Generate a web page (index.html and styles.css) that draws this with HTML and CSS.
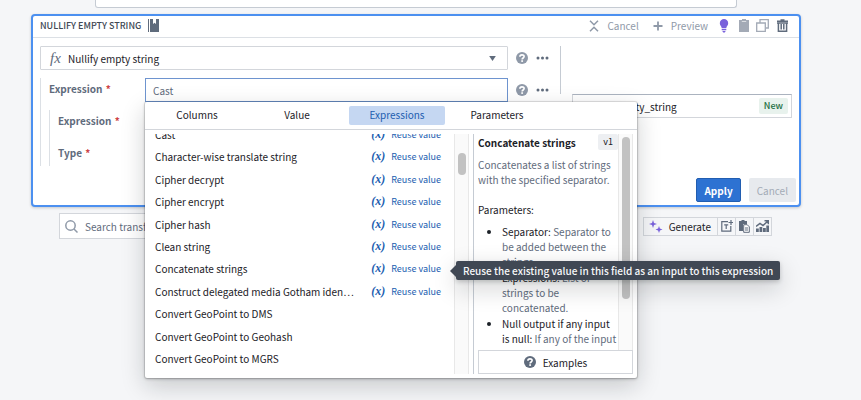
FILE: index.html
```html
<!DOCTYPE html>
<html lang="en">
<head>
  <meta charset="UTF-8">
  <meta name="viewport" content="width=device-width, initial-scale=1.0">
  <title>Nullify empty string</title>
  <link rel="stylesheet" href="styles.css">
</head>
<body>
  <!-- Shared icons -->
  <svg class="sprite" aria-hidden="true">
    <symbol id="help" viewBox="0 0 16 16">
      <circle cx="8" cy="8" r="8" fill="currentColor"/>
      <path d="M5.200 6.200C5.200 3 10.800 3 10.800 6c0 2-2.600 2-2.600 4" fill="none" stroke="#fff" stroke-width="2.200"/>
      <path d="M7 11h2.400v2.200H7z" fill="#fff"/>
    </symbol>
    <symbol id="more" viewBox="0 0 13 4">
      <circle cx="2" cy="2" r="1.500"/><circle cx="6.500" cy="2" r="1.500"/><circle cx="11" cy="2" r="1.500"/>
    </symbol>
  </svg>

  <!-- Previous transform -->
  <div class="previous-card"></div>

  <!-- Transform card -->
  <main class="card">
    <header class="card-header">
      <h1 class="card-title">Nullify empty string</h1>
      <svg class="icon-manual" viewBox="0 0 11 13" fill="#5f6b7c"><path d="M0 0h1v13H0zM2 0h3v5l1.500-1.300L8 5V0h3v13H2z"/></svg>
      <div class="card-actions">
        <button class="header-button" type="button">
          <svg width="10" height="12" viewBox="0 0 10 12" fill="none" stroke="currentColor" stroke-width="1.500"><path d="M1 .8l4 4 4-4M1 11.200l4-4 4 4"/></svg>
          Cancel
        </button>
        <button class="header-button preview" type="button">
          <svg width="10" height="10" viewBox="0 0 10 10" fill="none" stroke="currentColor" stroke-width="1.800"><path d="M5 .5v9M.5 5h9"/></svg>
          Preview
        </button>
        <button class="icon-button bulb" type="button" aria-label="Suggestions">
          <svg width="10" height="14" viewBox="0 0 10 14" fill="#7961db"><path d="M5 0a4.200 4.200 0 0 1 4.200 4.200C9.200 6.500 7.500 7 7.300 9H2.700C2.500 7 .8 6.500.8 4.200A4.200 4.200 0 0 1 5 0zM2.700 9.800h4.600v1.400H2.700zM3.300 12h3.400L5.800 13.400H4.200z"/></svg>
        </button>
        <button class="icon-button paste" type="button" aria-label="Paste">
          <svg width="10" height="13" viewBox="0 0 10 13" fill="#a3aab6"><path d="M3 0h4v1h3v12H0V1h3z"/><path d="M2.800 2.500h4.400" stroke="#fff" stroke-width=".6"/></svg>
        </button>
        <button class="icon-button copy" type="button" aria-label="Duplicate">
          <svg width="13" height="13" viewBox="0 0 13 13" fill="none" stroke="#a3aab6" stroke-width="1.300"><path d="M4 3.500V.7h8.300V9H10M.7 4h8.600v8.300H.7z"/></svg>
        </button>
        <button class="icon-button" type="button" aria-label="Delete">
          <svg width="11" height="13" viewBox="0 0 11 13" fill="none" stroke="#5f6b7c" stroke-width="1.500"><path d="M0 2.200h11M3.500 1h4M1.400 4v8.200h8.200V4M0 4h11M4.200 5v5.500M6.800 5v5.500"/></svg>
        </button>
      </div>
    </header>

    <form class="card-body">
      <div class="inputs">
        <div class="field-row">
          <div class="select-box">
            <span class="fx">fx</span>
            <select class="transform-select" aria-label="Transform">
              <option>Nullify empty string</option>
            </select>
            <svg class="caret" viewBox="0 0 8 6"><path d="M0 0h8L4 6z"/></svg>
          </div>
          <button class="row-icon help" type="button" aria-label="Help"><svg width="12" height="12"><use href="#help"/></svg></button>
          <button class="row-icon" type="button" aria-label="More"><svg width="13" height="4"><use href="#more"/></svg></button>
        </div>

        <div class="group">
          <div class="field-row">
            <label class="field-label" for="expression">Expression <span class="required">*</span></label>
            <div class="expression-box">
              <input class="expression-input" id="expression" type="text" placeholder="Cast">

              <!-- Suggestions popover -->
              <section class="popover">
                <div class="tabs">
                  <button class="tab" type="button">Columns</button>
                  <button class="tab" type="button">Value</button>
                  <button class="tab active" type="button">Expressions</button>
                  <button class="tab" type="button">Parameters</button>
                </div>
                <div class="popover-body">
                  <div class="option-scroll">
                    <ul class="options">
                      <li class="option"><span class="option-name">Cast</span><button class="reuse" type="button"><i>(x)</i>Reuse value</button></li>
                      <li class="option"><span class="option-name">Character-wise translate string</span><button class="reuse" type="button"><i>(x)</i>Reuse value</button></li>
                      <li class="option"><span class="option-name">Cipher decrypt</span><button class="reuse" type="button"><i>(x)</i>Reuse value</button></li>
                      <li class="option"><span class="option-name">Cipher encrypt</span><button class="reuse" type="button"><i>(x)</i>Reuse value</button></li>
                      <li class="option"><span class="option-name">Cipher hash</span><button class="reuse" type="button"><i>(x)</i>Reuse value</button></li>
                      <li class="option"><span class="option-name">Clean string</span><button class="reuse" type="button"><i>(x)</i>Reuse value</button></li>
                      <li class="option"><span class="option-name">Concatenate strings</span><button class="reuse" type="button"><i>(x)</i>Reuse value</button></li>
                      <li class="option"><span class="option-name">Construct delegated media Gotham iden…</span><button class="reuse" type="button"><i>(x)</i>Reuse value</button></li>
                      <li class="option"><span class="option-name">Convert GeoPoint to DMS</span></li>
                      <li class="option"><span class="option-name">Convert GeoPoint to Geohash</span></li>
                      <li class="option"><span class="option-name">Convert GeoPoint to MGRS</span></li>
                    </ul>
                  </div>
                  <div class="scrollbar list-scrollbar"><div class="thumb"></div></div>

                  <div class="details">
                    <div class="details-scroll">
                      <div class="details-content">
                        <div class="details-head">
                          <h2 class="details-title">Concatenate strings</h2>
                          <span class="version">v1</span>
                        </div>
                        <p class="description">Concatenates a list of strings with the specified separator.</p>
                        <p class="params-title">Parameters:</p>
                        <ul class="params">
                          <li><b>Separator:</b> Separator to be added between the strings.</li>
                          <li><b>Expressions:</b> List of strings to be concatenated.</li>
                          <li><b>Null output if any input is null:</b> If any of the input</li>
                        </ul>
                      </div>
                      <div class="scrollbar"><div class="thumb"></div></div>
                    </div>
                    <button class="examples" type="button"><svg width="12" height="12"><use href="#help"/></svg>Examples</button>
                  </div>
                </div>
                <div class="tooltip" role="tooltip">Reuse the existing value in this field as an input to this expression</div>
              </section>
            </div>
            <button class="row-icon help" type="button" aria-label="Help"><svg width="12" height="12"><use href="#help"/></svg></button>
            <button class="row-icon" type="button" aria-label="More"><svg width="13" height="4"><use href="#more"/></svg></button>
          </div>
          <div class="group nested">
            <div class="field-row"><span class="field-label">Expression <span class="required">*</span></span></div>
            <div class="field-row"><span class="field-label">Type <span class="required">*</span></span></div>
          </div>
        </div>
      </div>

      <div class="divider"></div>

      <div class="outputs">
        <div class="output-box">
          <input class="output-input" type="text" aria-label="Output column" value="nullify_empty_string">
          <span class="new-tag">New</span>
        </div>
      </div>
    </form>

    <footer class="card-footer">
      <button class="button primary" type="button">Apply</button>
      <button class="button" type="button" disabled>Cancel</button>
    </footer>
  </main>

  <!-- Add transform bar -->
  <div class="add-bar">
    <div class="search">
      <svg width="13" height="13" viewBox="0 0 13 13" fill="none" stroke="#8f99a8" stroke-width="1.500"><circle cx="5.500" cy="5.500" r="4.700"/><path d="M9 9l3.500 3.500"/></svg>
      <input class="search-input" type="text" aria-label="Search transforms" placeholder="Search transforms and columns">
    </div>
    <div class="tools">
      <button class="tool generate" type="button">
        <svg width="14" height="13" viewBox="0 0 14 13" fill="#7961db"><path d="M4 0l1 3 3 1-3 1-1 3-1-3-3-1 3-1zM10 6l.9 2.600 2.600.9-2.600.9-.9 2.600-.9-2.600-2.600-.9 2.600-.9z"/></svg>
        Generate
      </button>
      <button class="tool" type="button" aria-label="Add text">
        <svg width="12" height="12" viewBox="0 0 12 12" fill="none" stroke="#5f6b7c" stroke-width="1.200"><path d="M7 1.600H.8v9.600h9V6M3.200 4.800h4M5.200 4.800V9M10 0v5M7.500 2.500h4.500"/></svg>
      </button>
      <button class="tool" type="button" aria-label="Paste transform">
        <svg width="11" height="13" viewBox="0 0 11 13"><path d="M2.500 0h3v1H8v3H4v7H0V1h2.500z" fill="#5f6b7c"/><path d="M4.700 4.700h3.500l2.100 2.100v5.500H4.700zM6 8h3M6 10h3" fill="#fff" stroke="#5f6b7c"/></svg>
      </button>
      <button class="tool" type="button" aria-label="Add chart">
        <svg width="13" height="12" viewBox="0 0 13 12"><path d="M0 8.500h2.800V12H0zM3.500 7h2.800v5H3.500zM7 8h2.800v4H7zM10.300 5.500H13V12h-2.700z" fill="#5f6b7c"/><path d="M0 6.500l4-3 3 2L12 1M8.500.7h3.800v3.600" fill="none" stroke="#5f6b7c" stroke-width="1.500"/></svg>
      </button>
    </div>
  </div>
</body>
</html>
```
FILE: styles.css
```css
* {
  margin: 0;
  padding: 0;
  box-sizing: border-box;
}

body {
  font-family: "Noto Sans CJK SC", "Open Sans", sans-serif;
  font-size: 10px;
  line-height: 15px;
  color: #1c2127;
  background-color: #f5f6f8;
  min-height: 100vh;
  padding: 0 60px 0 31px;
  overflow: hidden;
}

button,
input,
select {
  font: inherit;
  color: inherit;
  background: none;
  border: none;
  outline: none;
}

button {
  display: flex;
  align-items: center;
  justify-content: center;
  white-space: nowrap;
}

ul {
  list-style: none;
}

svg {
  display: block;
  flex-shrink: 0;
}

.sprite {
  display: none;
}

/* Previous transform */
.previous-card {
  height: 8px;
  margin: 0 64px 6px 64px;
  background-color: #fff;
  border: 1px solid #c5cbd3;
  border-top: none;
  border-radius: 0 0 3px 3px;
}

/* Transform card */
.card {
  background-color: #fff;
  border: 2px solid #4c90f0;
  border-radius: 4px;
  box-shadow: 0 1px 3px rgba(17, 20, 24, 0.2);
}

.card-header {
  display: flex;
  align-items: center;
  height: 22px;
  padding: 0 11px 2px 7px;
  border-bottom: 1px solid #dce0e5;
}

.card-title {
  font-size: 9px;
  font-weight: 500;
  text-transform: uppercase;
  color: #404854;
}

.icon-manual {
  width: 11px;
  height: 13px;
  margin-left: 7px;
}

.card-actions {
  display: flex;
  align-items: center;
  margin-left: auto;
}

.header-button {
  gap: 8px;
  color: #8f99a8;
}

.header-button.preview {
  margin-left: 14px;
  gap: 8px;
}

.icon-button.bulb {
  margin: 0 10px 0 11px;
}

.icon-button.copy {
  margin: 0 8px 0 7px;
}

/* Form */
.card-body {
  display: flex;
  align-items: flex-start;
  padding: 8px 7px 0;
}

.inputs {
  flex: 1;
  display: flex;
  flex-direction: column;
  gap: 8px;
}

.field-row {
  display: flex;
  align-items: center;
  height: 24px;
}

.select-box {
  flex: 1;
  display: flex;
  align-items: center;
  height: 24px;
  padding: 0 11px 0 9px;
  border: 1px solid #d3d6db;
  border-radius: 1px;
}

.fx {
  width: 18px;
  font-family: "Liberation Serif", serif;
  font-size: 15px;
  font-style: italic;
  color: #5f6b7c;
}

.transform-select {
  flex: 1;
  appearance: none;
}

.caret {
  width: 7px;
  height: 5px;
  fill: #5f6b7c;
}

.row-icon {
  width: 13px;
  fill: #5f6b7c;
}

.row-icon.help {
  width: 12px;
  margin: 0 8px;
  color: #8f99a8;
}

.group {
  display: flex;
  flex-direction: column;
  gap: 8px;
  padding-left: 8px;
  border-left: 1px solid #dce0e5;
}

.field-label {
  width: 96px;
  padding-bottom: 3px;
  font-weight: 700;
  color: #5f6b7c;
}

.required {
  margin-left: 1px;
  color: #cd4246;
}

.expression-box {
  flex: 1;
  position: relative;
}

.expression-input {
  display: block;
  width: 100%;
  height: 24px;
  padding: 0 7px;
  border: 1px solid #6e94cf;
}

.expression-input::placeholder,
.search-input::placeholder {
  color: #5f6b7c;
  opacity: 1;
}

.divider {
  width: 1px;
  height: 48px;
  margin: 0 11px;
  background-color: #c5cbd3;
}

.outputs {
  width: 220px;
  padding-top: 48px;
}

.output-box {
  display: flex;
  align-items: center;
  height: 24px;
  padding: 0 3px 0 7px;
  border: 1px solid #d3d6db;
  border-top-color: #abb3bf;
}

.output-input {
  flex: 1;
  min-width: 0;
}

.new-tag {
  padding: 0 5px;
  font-size: 9px;
  line-height: 16px;
  font-weight: 500;
  color: #1c6e42;
  background-color: #e8f2ed;
  border-radius: 2px;
}

.card-footer {
  display: flex;
  justify-content: flex-end;
  gap: 8px;
  padding: 12px 3px 3px;
}

.button {
  height: 24px;
  padding: 0 8px;
  color: #a3aab6;
  background-color: #e7eaee;
  border-radius: 2px;
}

.button.primary {
  padding: 0 7px;
  font-weight: 700;
  color: #fff;
  background-color: #2d72d2;
  border: 1px solid #215db0;
}

/* Suggestions popover */
.popover {
  position: absolute;
  top: 24px;
  left: 0;
  z-index: 10;
  width: 492px;
  background-color: #fff;
  border-radius: 2px;
  box-shadow: 0 0 0 1px rgba(17, 20, 24, 0.1), 0 1px 3px rgba(17, 20, 24, 0.3), 0 8px 24px rgba(17, 20, 24, 0.2);
}

.tabs {
  display: flex;
  gap: 4px;
  padding: 4px;
  border-bottom: 1px solid #d3d6db;
}

.tab {
  width: 96px;
  height: 19px;
  padding-bottom: 2px;
  border-radius: 2px;
}

.tab.active {
  color: #215db0;
  background-color: #c5d7f2;
}

.popover-body {
  display: flex;
  height: 248px;
  padding: 4px;
}

.option-scroll {
  flex: 1;
  display: flex;
  flex-direction: column;
  justify-content: flex-end;
  overflow: hidden;
  padding: 0 13px 4px 6px;
}

.options {
  flex-shrink: 0;
  display: grid;
  grid-auto-rows: 1fr;
  height: 247px;
}

.option {
  display: flex;
  align-items: center;
  justify-content: space-between;
}

.option-name {
  white-space: nowrap;
}

.reuse {
  gap: 6px;
  font-size: 9px;
  color: #215db0;
}

.reuse i {
  font-family: "Liberation Serif", serif;
  font-size: 12px;
  font-weight: 700;
}

.scrollbar {
  flex-shrink: 0;
  width: 15px;
  padding: 3px;
  background-color: #fafafa;
  border: 1px solid #e8e8e8;
  border-width: 0 1px;
}

.thumb {
  width: 8px;
  height: 162px;
  margin: 0 auto;
  background-color: #c2c2c2;
  border-radius: 4px;
}

.list-scrollbar {
  padding-top: 19px;
}

.list-scrollbar .thumb {
  height: 22px;
}

.details {
  display: flex;
  flex-direction: column;
  width: 160px;
  margin-left: 4px;
  padding-left: 4px;
  border-left: 1px solid #c5cbd3;
}

.details-scroll {
  flex: 1;
  display: flex;
  min-height: 0;
  overflow: hidden;
}

.details-content {
  flex: 1;
  color: #5f6b7c;
}

.details-head {
  display: flex;
  align-items: center;
  justify-content: space-between;
  height: 16px;
  color: #1c2127;
}

.details-title {
  font-size: 10px;
  font-weight: 700;
  white-space: nowrap;
}

.version {
  padding: 0 5px;
  font-size: 9px;
  line-height: 16px;
  background-color: #edeff2;
  border-radius: 2px;
}

.description {
  margin: 7px 0 15px;
}

.params-title {
  margin-bottom: 7px;
  color: #1c2127;
}

.params {
  padding-left: 24px;
  list-style: disc;
}

.params li {
  margin-bottom: 1px;
}

.params li::marker,
.params b {
  font-weight: 400;
  color: #1c2127;
}

.examples {
  gap: 7px;
  height: 24px;
  border: 1px solid #d3d6db;
}

.examples svg {
  color: #5f6b7c;
}

/* Tooltip */
.tooltip {
  position: absolute;
  top: 159px;
  left: 311px;
  padding: 2px 7px;
  font-weight: 500;
  white-space: nowrap;
  color: #f6f7f9;
  background-color: #404854;
  border-radius: 2px;
  box-shadow: 0 2px 4px rgba(17, 20, 24, 0.2), 0 8px 24px rgba(17, 20, 24, 0.2);
}

.tooltip::before {
  content: "";
  position: absolute;
  top: 4px;
  left: -6px;
  border: 6px solid transparent;
  border-right-color: #404854;
  border-left: none;
}

/* Add transform bar */
.add-bar {
  display: flex;
  align-items: center;
  gap: 8px;
  padding: 6px 29px 0 28px;
}

.search {
  flex: 1;
  display: flex;
  align-items: center;
  gap: 7px;
  height: 26px;
  padding: 0 5px;
  background-color: #fff;
  border: 1px solid #d3d6db;
}

.search-input {
  flex: 1;
}

.tools {
  display: flex;
  border: 1px solid #d3d6db;
}

.tool {
  width: 18px;
  height: 17px;
  border-left: 1px solid #d3d6db;
}

.tool.generate {
  gap: 6px;
  width: auto;
  padding: 0 6px 0 5px;
  border-left: none;
}
```
